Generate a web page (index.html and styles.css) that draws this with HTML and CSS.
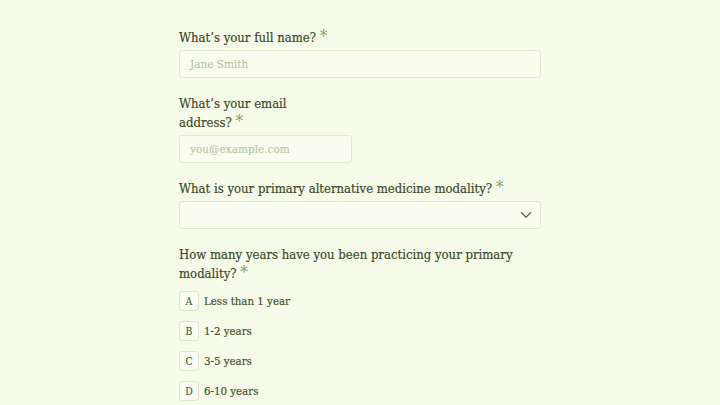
FILE: index.html
```html
<!DOCTYPE html>
<html lang="en">
<head>
<meta charset="utf-8">
<title>Practitioner survey</title>
<link rel="stylesheet" href="styles.css">
</head>
<body>
<form class="form">
  <div class="field">
    <label class="label">What’s your full <span class="nw">name?&nbsp;<span class="req">*</span></span></label>
    <div class="input"><span class="ph">Jane Smith</span></div>
  </div>
  <div class="row">
    <div class="field half">
      <label class="label">What’s your email <span class="nw">address?&nbsp;<span class="req">*</span></span></label>
      <div class="input"><span class="ph">you@example.com</span></div>
    </div>
  </div>
  <div class="field">
    <label class="label">What is your primary alternative medicine <span class="nw">modality?&nbsp;<span class="req">*</span></span></label>
    <div class="input select">
      <svg class="chev" width="12" height="8" viewBox="0 0 12 8"><path d="M1.5 1.8 L6 6.2 L10.5 1.8" fill="none" stroke="#5a6a44" stroke-width="1.3" stroke-linecap="round" stroke-linejoin="round"/></svg>
    </div>
  </div>
  <div class="field">
    <label class="label">How many years have you been practicing your primary <span class="nw">modality?&nbsp;<span class="req">*</span></span></label>
    <div class="options">
      <div class="opt"><span class="key">A</span><span>Less than 1 year</span></div>
      <div class="opt"><span class="key">B</span><span>1-2 years</span></div>
      <div class="opt"><span class="key">C</span><span>3-5 years</span></div>
      <div class="opt"><span class="key">D</span><span>6-10 years</span></div>
    </div>
  </div>
</form>
</body>
</html>
```
FILE: styles.css
```css
html, body {
  margin: 0;
  padding: 0;
  background: #f7fbea;
}
body {
  font-family: "DejaVu Serif Condensed", "DejaVu Serif", serif;
  color: #3d4d2a;
  overflow: hidden;
  height: 405px;
}
.form {
  width: 362px;
  margin-left: 179px;
  padding-top: 28px;
  display: flex;
  flex-direction: column;
  gap: 16px;
}
.field {
  display: flex;
  flex-direction: column;
  gap: 3px;
}
.row {
  display: grid;
  grid-template-columns: 1fr 1fr;
  column-gap: 16px;
}
.label {
  font-size: 13px;
  line-height: 19px;
  -webkit-text-stroke: 0.2px #3d4d2a;
}
.nw {
  white-space: nowrap;
}
.req {
  color: #85a466;
  font-size: 17px;
  line-height: 0;
  -webkit-text-stroke: 0;
}
.input {
  height: 28px;
  box-sizing: border-box;
  border: 1px solid #e1e9cf;
  border-radius: 3px;
  background: #f9fcef;
  display: flex;
  align-items: center;
  padding: 0 10px;
}
.ph {
  color: #b3c19d;
  font-size: 11.7px;
}
.select {
  justify-content: flex-end;
  padding-right: 8px;
}
.options {
  display: flex;
  flex-direction: column;
  gap: 10px;
  margin-top: 5px;
}
.opt {
  display: flex;
  align-items: center;
  gap: 5px;
  height: 20px;
  font-size: 11.4px;
  color: #46552f;
  -webkit-text-stroke: 0.2px #46552f;
}
.key {
  width: 20px;
  height: 20px;
  box-sizing: border-box;
  border: 1px solid #dfe7cb;
  border-radius: 3px;
  background: #f9fcf0;
  display: flex;
  align-items: center;
  justify-content: center;
  font-size: 10.4px;
  color: #4a5936;
  -webkit-text-stroke: 0.1px #4a5936;
}
```
